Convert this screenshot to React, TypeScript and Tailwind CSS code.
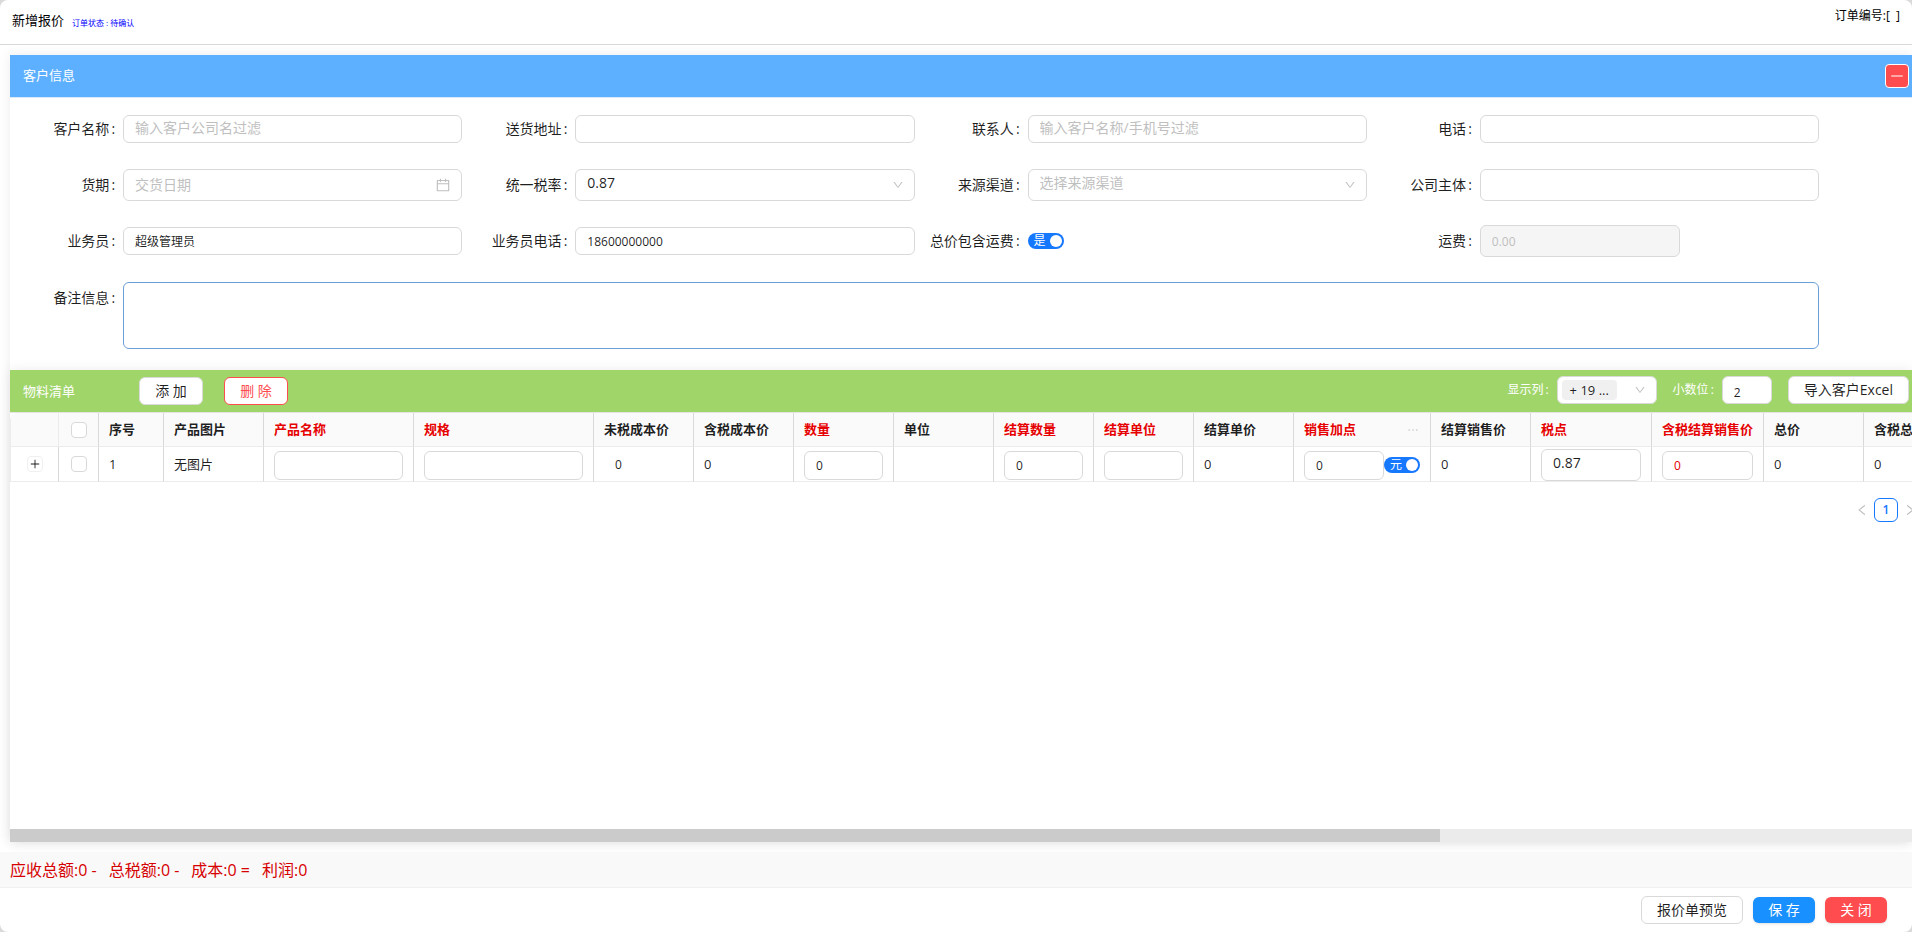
import { useState } from "react";
import type { ReactNode } from "react";
import {
  AiOutlineCalendar,
  AiOutlineDown,
  AiOutlineEllipsis,
  AiOutlineLeft,
  AiOutlineMinus,
  AiOutlinePlus,
  AiOutlineRight,
} from "react-icons/ai";

const fieldClass =
  "w-full rounded-md border border-[#d9d9d9] bg-white px-[11px] text-xs text-black/88 outline-none placeholder:text-sm placeholder:text-[#bfbfbf]";

interface Column {
  title: string;
  width: string;
  required?: boolean;
  more?: boolean;
  cell: ReactNode;
}

// ===================== CONTROLS =====================

function Field({ label, id, children }: { label: string; id: string; children: ReactNode }) {
  return (
    <div className="flex h-8 items-center">
      <label htmlFor={id} className="w-1/4 shrink-0 pr-2 text-right text-sm whitespace-nowrap">
        {label}
        <span className="ml-0.5">:</span>
      </label>
      <div className="flex w-3/4 items-center">{children}</div>
    </div>
  );
}

function Switch({ id, text, label }: { id: string; text: string; label: string }) {
  const [on, setOn] = useState(true);

  return (
    <button
      id={id}
      type="button"
      role="switch"
      aria-checked={on}
      aria-label={label}
      onClick={() => setOn(!on)}
      className="flex h-4 w-9 shrink-0 items-center justify-between rounded-full bg-[#1677ff] pr-0.5 pl-1.5 text-xs leading-4 text-white"
    >
      {text}
      <span className="h-3 w-3 rounded-full bg-white" />
    </button>
  );
}

function SelectBox({ id, options, muted }: { id: string; options: string[]; muted?: boolean }) {
  return (
    <div className="relative w-full">
      <select
        id={id}
        className={`block h-8 w-full appearance-none rounded-md border border-[#d9d9d9] bg-white px-[11px] pb-1 text-sm outline-none ${
          muted ? "text-[#bfbfbf]" : "text-black/88"
        }`}
      >
        {options.map((o) => (
          <option key={o}>{o}</option>
        ))}
      </select>
      <AiOutlineDown className="pointer-events-none absolute top-2.5 right-[11px] text-xs text-[#bfbfbf]" />
    </div>
  );
}

function CellInput({ label, value = "", red }: { label: string; value?: string; red?: boolean }) {
  return (
    <input
      aria-label={label}
      defaultValue={value}
      className={`block h-[29px] w-full rounded-md border border-[#d9d9d9] bg-white px-[11px] text-xs outline-none ${
        red ? "text-[#e60000]" : "text-black/88"
      }`}
    />
  );
}

function Checkbox({ label }: { label: string }) {
  return (
    <input
      type="checkbox"
      aria-label={label}
      className="mx-auto block h-4 w-4 appearance-none rounded border border-[#d9d9d9] bg-white checked:bg-[#1677ff]"
    />
  );
}

// ===================== TABLE =====================

const columns: Column[] = [
  { title: "序号", width: "w-[65px]", cell: "1" },
  { title: "产品图片", width: "w-[100px]", cell: "无图片" },
  { title: "产品名称", width: "w-[150px]", required: true, cell: <CellInput label="产品名称" /> },
  { title: "规格", width: "w-[180px]", required: true, cell: <CellInput label="规格" /> },
  { title: "未税成本价", width: "w-[100px]", cell: <span className="block px-[11px] text-xs">0</span> },
  { title: "含税成本价", width: "w-[100px]", cell: "0" },
  { title: "数量", width: "w-[100px]", required: true, cell: <CellInput label="数量" value="0" /> },
  { title: "单位", width: "w-[100px]", cell: "" },
  { title: "结算数量", width: "w-[100px]", required: true, cell: <CellInput label="结算数量" value="0" /> },
  { title: "结算单位", width: "w-[100px]", required: true, cell: <CellInput label="结算单位" /> },
  { title: "结算单价", width: "w-[100px]", cell: "0" },
  {
    title: "销售加点",
    width: "w-[137px]",
    required: true,
    more: true,
    cell: (
      <div className="flex items-center">
        <CellInput label="销售加点" value="0" />
        <Switch id="markupUnit" text="元" label="加点单位" />
      </div>
    ),
  },
  { title: "结算销售价", width: "w-[100px]", cell: "0" },
  {
    title: "税点",
    width: "w-[121px]",
    required: true,
    cell: (
      <select
        aria-label="税点"
        className="block h-8 w-full appearance-none rounded-md border border-[#d9d9d9] bg-white px-[11px] pb-1 text-sm outline-none"
      >
        <option>0.87</option>
      </select>
    ),
  },
  { title: "含税结算销售价", width: "w-[112px]", required: true, cell: <CellInput label="含税结算销售价" value="0" red /> },
  { title: "总价", width: "w-[100px]", cell: "0" },
  { title: "含税总价", width: "w-[100px]", cell: "0" },
];

function MaterialTable() {
  return (
    <div className="overflow-hidden rounded-tl-lg">
      <table className="w-[1954px] table-fixed border-separate border-spacing-0 text-[13px]">
        <thead>
          <tr className="h-[34px] bg-[#fafafa]">
            <th className="w-[49px] border-r border-b border-l border-[#ececec]" />
            <th className="w-10 border-r border-b border-[#ececec] border-r-[#d9d9d9]">
              <Checkbox label="全选" />
            </th>
            {columns.map((c) => (
              <th
                key={c.title}
                className={`border-r border-b border-[#ececec] border-r-[#d9d9d9] px-[10px] text-left font-bold whitespace-nowrap ${c.width} ${
                  c.required ? "text-[#e60000]" : "text-black/88"
                }`}
              >
                <div className="flex items-center justify-between">
                  {c.title}
                  {c.more && <AiOutlineEllipsis className="text-sm text-[#bfbfbf]" />}
                </div>
              </th>
            ))}
          </tr>
        </thead>
        <tbody>
          <tr className="h-[35px]">
            <td className="border-r border-b border-l border-[#ececec] border-r-[#d9d9d9]">
              <button
                type="button"
                aria-label="展开"
                className="mx-auto flex h-4 w-4 items-center justify-center rounded border border-[#f0f0f0] text-xs"
              >
                <AiOutlinePlus className="shrink-0" />
              </button>
            </td>
            <td className="border-r border-b border-[#ececec] border-r-[#d9d9d9]">
              <Checkbox label="选择第1行" />
            </td>
            {columns.map((c) => (
              <td key={c.title} className="border-r border-b border-[#ececec] border-r-[#d9d9d9] px-[10px] pt-0.5">
                {c.cell}
              </td>
            ))}
          </tr>
        </tbody>
      </table>
    </div>
  );
}

// ===================== PAGE =====================

export default function App() {
  return (
    <div className="min-h-screen bg-[#d9d9d9]">
      <div className='flex min-h-screen flex-col overflow-hidden rounded-lg bg-white font-["Open_Sans","Noto_Sans_CJK_SC",sans-serif] text-black/88'>
        {/* Title bar */}
        <header className="flex h-[45px] shrink-0 justify-between border-b border-[#d9d9d9] px-3 text-black">
          <div className="flex items-center gap-2 pb-0.5">
            <h1 className="text-[13px]">新增报价</h1>
            <span className="pt-1 text-[8px] text-[#0000ff]">订单状态 : 待确认</span>
          </div>
          <div className="pt-2 text-xs leading-4 whitespace-pre">订单编号:[  ]</div>
        </header>

        <main className="flex flex-1 flex-col overflow-hidden py-[10px] pl-[10px]">
          <div className="flex flex-1 flex-col shadow-[0_0_12px_rgba(0,0,0,0.08)]">
            {/* Customer info */}
            <section className="bg-white">
              <div className="flex h-[43px] items-center justify-between border-b border-[#d9e9f9] bg-[#5cb0ff] pr-[3px] pl-[13px]">
                <h2 className="text-[13px] text-white">客户信息</h2>
                <button
                  type="button"
                  aria-label="收起"
                  className="flex h-6 w-6 items-center justify-center rounded border border-white bg-[#ff4d4f] text-base text-white"
                >
                  <AiOutlineMinus />
                </button>
              </div>

              <form className="flex flex-col gap-[25px] pt-[15px] pr-[93px] pb-[21px]">
                <div className="grid grid-cols-4 gap-y-6">
                  <Field label="客户名称" id="customer">
                    <input id="customer" placeholder="输入客户公司名过滤" className={`${fieldClass} h-7 pb-0.5`} />
                  </Field>
                  <Field label="送货地址" id="address">
                    <input id="address" className={`${fieldClass} h-7`} />
                  </Field>
                  <Field label="联系人" id="contact">
                    <input id="contact" placeholder="输入客户名称/手机号过滤" className={`${fieldClass} h-7 pb-0.5`} />
                  </Field>
                  <Field label="电话" id="phone">
                    <input id="phone" className={`${fieldClass} h-7`} />
                  </Field>

                  <Field label="货期" id="delivery">
                    <div className="relative w-full">
                      <input id="delivery" placeholder="交货日期" className={`${fieldClass} block h-8`} />
                      <AiOutlineCalendar className="pointer-events-none absolute top-2 right-[11px] text-base text-[#bfbfbf]" />
                    </div>
                  </Field>
                  <Field label="统一税率" id="taxRate">
                    <SelectBox id="taxRate" options={["0.87"]} />
                  </Field>
                  <Field label="来源渠道" id="channel">
                    <SelectBox id="channel" options={["选择来源渠道"]} muted />
                  </Field>
                  <Field label="公司主体" id="company">
                    <input id="company" className={`${fieldClass} h-8`} />
                  </Field>

                  <Field label="业务员" id="sales">
                    <input id="sales" defaultValue="超级管理员" className={`${fieldClass} h-7`} />
                  </Field>
                  <Field label="业务员电话" id="salesPhone">
                    <input id="salesPhone" defaultValue="18600000000" className={`${fieldClass} h-7`} />
                  </Field>
                  <Field label="总价包含运费" id="withFreight">
                    <Switch id="withFreight" text="是" label="总价包含运费" />
                  </Field>
                  <Field label="运费" id="freight">
                    <input
                      id="freight"
                      disabled
                      defaultValue="0.00"
                      className="h-8 w-[200px] rounded-md border border-[#d9d9d9] bg-[#f5f5f5] px-[11px] text-xs text-[#bfbfbf]"
                    />
                  </Field>
                </div>

                <div className="flex">
                  <label htmlFor="remark" className="w-1/16 shrink-0 pr-2 text-right text-sm leading-8 whitespace-nowrap">
                    备注信息<span className="ml-0.5">:</span>
                  </label>
                  <textarea
                    id="remark"
                    className="block h-[67px] flex-1 resize-none rounded-md border border-[#6a9fd8] px-[11px] py-1 text-sm outline-none"
                  />
                </div>
              </form>
            </section>

            {/* Material list */}
            <section className="flex flex-1 flex-col bg-white shadow-[0_0_12px_rgba(0,0,0,0.08)]">
              <div className="flex h-[43px] items-center border-b border-[#e4e4e4] bg-[#a0d569] pr-[3px] pl-[13px] text-sm">
                <h2 className="w-[116px] text-[13px] text-white">物料清单</h2>
                <button type="button" className="h-7 w-16 rounded-md border border-[#d9d9d9] bg-white">
                  添 加
                </button>
                <button
                  type="button"
                  className="ml-[21px] h-7 w-16 rounded-md border border-[#ff4d4f] bg-white text-[#ff4d4f]"
                >
                  删 除
                </button>

                <div className="ml-auto flex items-center pb-0.5">
                  <span className="pr-2 text-xs text-white">
                    显示列<span className="ml-0.5">:</span>
                  </span>
                  <button
                    type="button"
                    aria-label="显示列"
                    className="flex h-7 w-[100px] items-center justify-between rounded-md border border-[#d9d9d9] bg-white pr-[10px] pl-1"
                  >
                    <span className="h-5 rounded bg-[#f0f0f0] px-2 text-[13px] leading-5">+ 19 ...</span>
                    <AiOutlineDown className="text-xs text-[#bfbfbf]" />
                  </button>
                  <label htmlFor="decimals" className="pr-2 pl-4 text-xs text-white">
                    小数位<span className="ml-0.5">:</span>
                  </label>
                  <input
                    id="decimals"
                    defaultValue="2"
                    className="h-7 w-[50px] rounded-md border border-[#d9d9d9] bg-white px-[11px] pt-1 text-xs outline-none"
                  />
                  <button
                    type="button"
                    className="ml-4 h-7 rounded-md border border-[#d9d9d9] bg-white px-[15px] whitespace-nowrap"
                  >
                    导入客户Excel
                  </button>
                </div>
              </div>

              <MaterialTable />

              <nav aria-label="分页" className="mt-4 -mr-[10px] flex items-center justify-end text-sm">
                <button type="button" aria-label="上一页" className="flex h-6 w-6 items-center justify-center text-[#bfbfbf]">
                  <AiOutlineLeft />
                </button>
                <button
                  type="button"
                  className="h-6 w-6 rounded-md border border-[#1677ff] text-xs font-semibold text-[#1677ff]"
                >
                  1
                </button>
                <button type="button" aria-label="下一页" className="flex h-6 w-6 items-center justify-center text-[#bfbfbf]">
                  <AiOutlineRight />
                </button>
              </nav>

              <div className="mt-auto h-[13px] bg-[#ebebeb]">
                <div className="h-full w-[75.2%] bg-[#cbcbcb]" />
              </div>
            </section>
          </div>
        </main>

        {/* Totals */}
        <div className="flex h-9 shrink-0 items-center gap-3 border-b border-[#f0f0f0] bg-[#f9f9f9] px-[10px] text-base whitespace-pre text-[#d60000]">
          <span>应收总额:0 -</span>
          <span>总税额:0 -</span>
          <span>成本:0 =</span>
          <span>利润:0</span>
        </div>

        {/* Actions */}
        <footer className="flex h-11 shrink-0 items-center justify-end gap-[10px] pr-[25px] pb-2 pt-2 text-sm">
          <button type="button" className="h-7 rounded-md border border-[#d9d9d9] bg-white px-[15px]">
            报价单预览
          </button>
          <button type="button" className="h-[26px] w-[62px] rounded-md bg-[#1890ff] text-white shadow-sm">
            保 存
          </button>
          <button type="button" className="h-[26px] w-[62px] rounded-md bg-[#ff4d4f] text-white shadow-sm">
            关 闭
          </button>
        </footer>
      </div>
    </div>
  );
}
